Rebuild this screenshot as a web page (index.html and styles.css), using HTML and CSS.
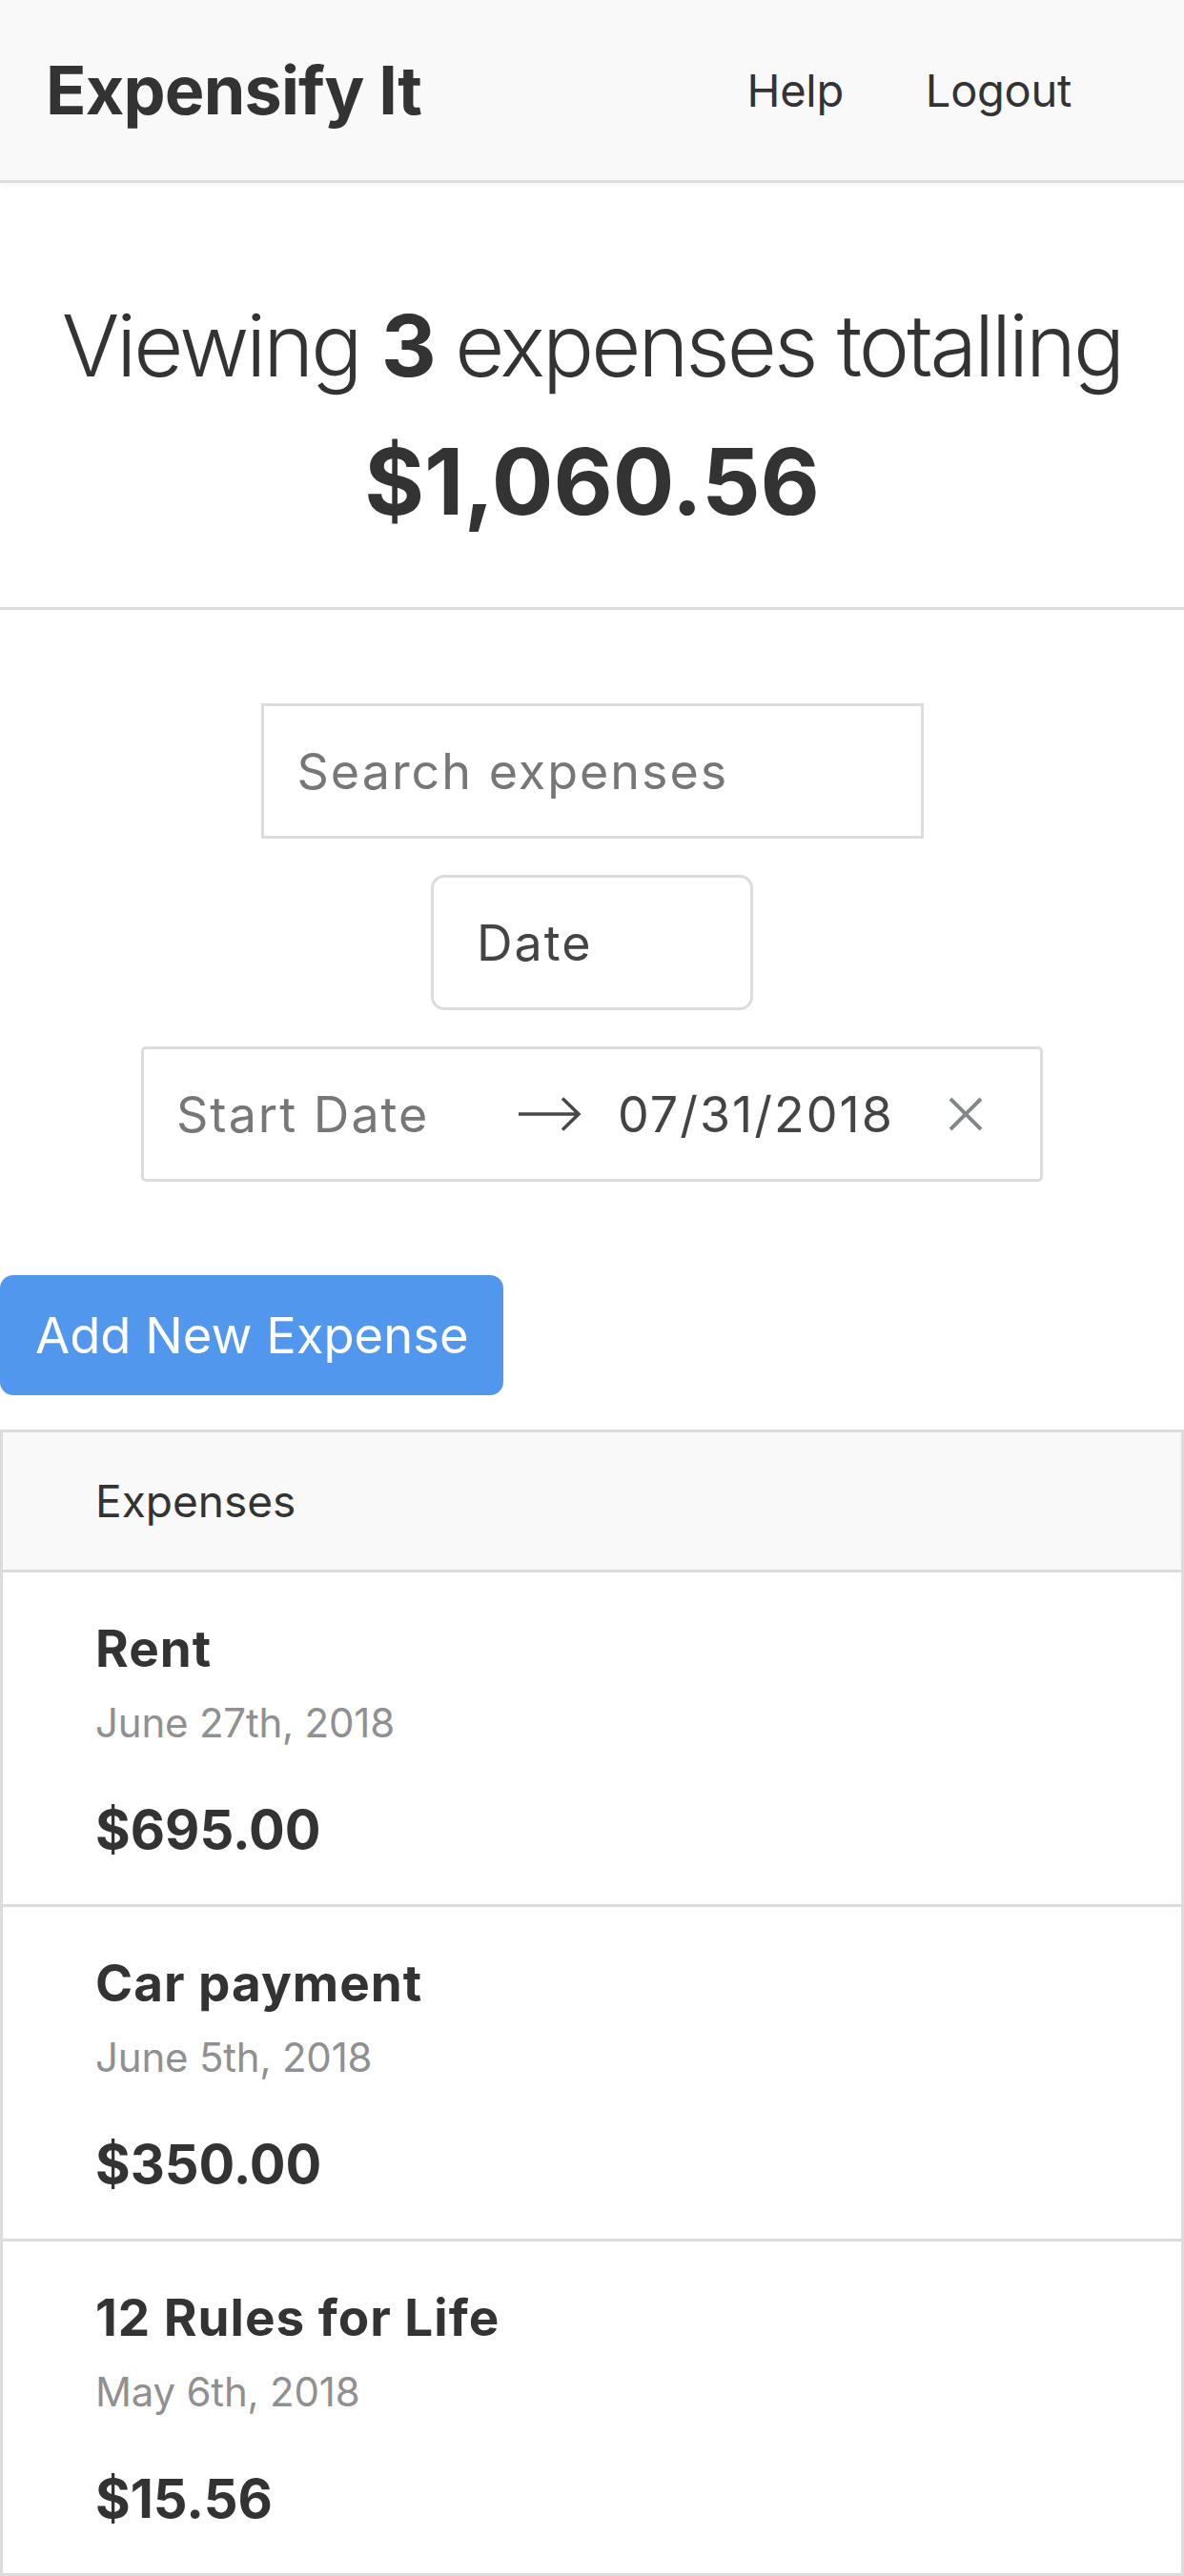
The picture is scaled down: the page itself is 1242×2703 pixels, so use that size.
FILE: index.html
```html
<!DOCTYPE html>
<html lang="en">
<head>
<meta charset="utf-8">
<title>Expensify It</title>
<link rel="stylesheet" href="styles.css">
</head>
<body>
<header class="header">
  <div class="header__content">
    <h1 class="header__title">Expensify It</h1>
    <nav class="header__nav">
      <a class="header__link" href="#">Help</a>
      <a class="header__link" href="#">Logout</a>
    </nav>
  </div>
</header>

<section class="summary">
  <h2 class="summary__title">
    <span class="summary__line">Viewing <b>3</b> expenses totalling</span>
    <span class="summary__line summary__total">$1,060.56</span>
  </h2>
</section>

<section class="filters">
  <div class="text-input"><span class="placeholder">Search expenses</span></div>
  <div class="select">Date</div>
  <div class="daterange">
    <span class="daterange__start placeholder">Start Date</span>
    <svg class="daterange__arrow" width="67" height="36" viewBox="0 0 67 36">
      <path d="M1 18 H64 M47 1.5 L64 18 L47 34.5" fill="none" stroke="#484848" stroke-width="3.5"/>
    </svg>
    <span class="daterange__end">07/31/2018</span>
    <svg class="daterange__clear" width="36" height="36" viewBox="0 0 36 36">
      <path d="M2 2 L34 34 M34 2 L2 34" fill="none" stroke="#82888a" stroke-width="4"/>
    </svg>
  </div>
</section>

<div class="actions">
  <button class="button">Add New Expense</button>
</div>

<section class="list">
  <div class="list__header">Expenses</div>
  <div class="list__item">
    <h3 class="list__title">Rent</h3>
    <span class="list__date">June 27th, 2018</span>
    <h3 class="list__amount">$695.00</h3>
  </div>
  <div class="list__item">
    <h3 class="list__title">Car payment</h3>
    <span class="list__date">June 5th, 2018</span>
    <h3 class="list__amount">$350.00</h3>
  </div>
  <div class="list__item">
    <h3 class="list__title">12 Rules for Life</h3>
    <span class="list__date">May 6th, 2018</span>
    <h3 class="list__amount">$15.56</h3>
  </div>
</section>
</body>
</html>
```

FILE: styles.css
```css
* {
  box-sizing: border-box;
}

html, body {
  margin: 0;
  padding: 0;
  background: #fff;
}

body {
  font-family: Inter, "Noto Sans", "Liberation Sans", sans-serif;
  color: #333;
}

/* Header */
.header {
  background: #f9f9f9;
  border-bottom: 3px solid #dcdcdc;
  box-shadow: 0 3px 6px rgba(0, 0, 0, 0.04);
}

.header__content {
  display: flex;
  align-items: center;
  justify-content: space-between;
  height: 189px;
  padding: 0 118px 0 48px;
}

.header__title {
  margin: 0;
  font-size: 70px;
  font-weight: 700;
  letter-spacing: -0.8px;
}

.header__nav {
  display: flex;
  gap: 86px;
}

.header__link {
  font-size: 47px;
  color: #333;
  text-decoration: none;
  letter-spacing: -0.3px;
}

/* Summary */
.summary {
  border-bottom: 3px solid #dcdcdc;
  padding: 99px 0 60px;
  text-align: center;
}

.summary__title {
  margin: 0;
  font-weight: 300;
}

.summary__line {
  display: block;
  font-size: 90px;
  line-height: 143px;
  letter-spacing: -3px;
}

.summary__line b {
  font-weight: 700;
}

.summary__total {
  font-size: 96px;
  font-weight: 700;
  letter-spacing: 0;
}

/* Filters */
.filters {
  display: flex;
  flex-direction: column;
  align-items: center;
  gap: 38px;
  padding-top: 98px;
}

.placeholder {
  color: #777;
}

.text-input,
.select,
.daterange {
  display: flex;
  align-items: center;
  height: 142px;
  border: 3px solid #dcdcdc;
  background: #fff;
  font-size: 52px;
  letter-spacing: 2px;
}

.text-input {
  width: 695px;
  padding-left: 35px;
}

.select {
  width: 338px;
  padding-left: 45px;
  border-radius: 14px;
  color: #444;
}

.daterange {
  width: 946px;
  border-radius: 5px;
}

.daterange__start {
  width: 374px;
  padding-left: 34px;
}

.daterange__arrow {
  margin-left: 18px;
  flex: none;
}

.daterange__end {
  width: 385px;
  padding-left: 38px;
  color: #444;
}

.daterange__clear {
  flex: none;
}

/* Actions */
.actions {
  padding-top: 98px;
}

.button {
  display: block;
  width: 528px;
  height: 126px;
  padding: 0 0 0 37px;
  border: 0;
  border-radius: 14px;
  background: #5297ee;
  color: #fff;
  font-family: inherit;
  font-size: 52.5px;
  text-align: left;
}

/* List */
.list {
  margin-top: 36px;
  border: 3px solid #dcdcdc;
  border-bottom: 0;
}

.list__header {
  display: flex;
  align-items: center;
  height: 147px;
  padding-left: 97px;
  background: #f9f9f9;
  border-bottom: 3px solid #dcdcdc;
  font-size: 46px;
}

.list__item {
  display: flex;
  flex-direction: column;
  height: 351px;
  padding: 0 97px;
  border-bottom: 3px solid #dcdcdc;
}

.list__title {
  margin: 0;
  padding-top: 45px;
  font-size: 53px;
  line-height: 70px;
  font-weight: 700;
  letter-spacing: 1px;
}

.list__date {
  margin-top: 13px;
  font-size: 42px;
  line-height: 60px;
  color: #909090;
  letter-spacing: -0.2px;
}

.list__amount {
  margin: 0;
  margin-top: 47px;
  font-size: 56px;
  line-height: 70px;
  font-weight: 700;
}
```
